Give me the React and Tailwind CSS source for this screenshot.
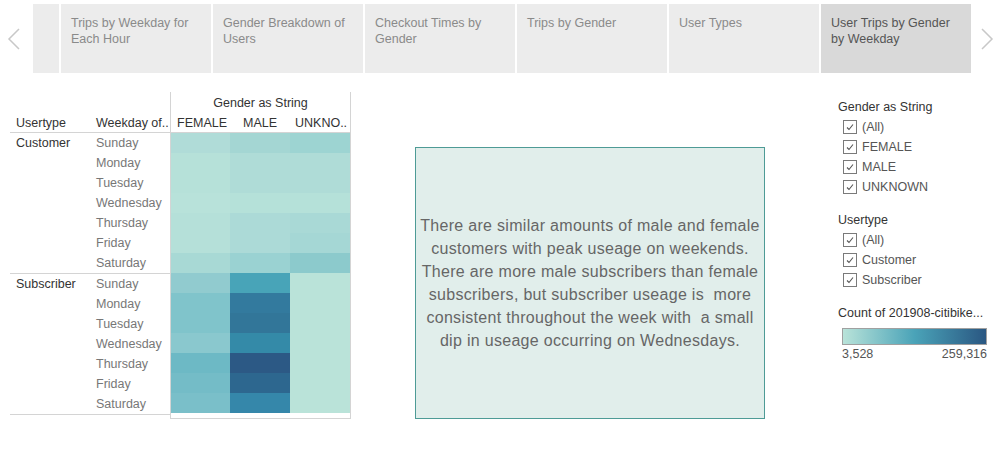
import React from 'react';

const tabs = [
  'Trips by Weekday for Each Hour',
  'Gender Breakdown of Users',
  'Checkout Times by Gender',
  'Trips by Gender',
  'User Types',
  'User Trips by Gender by Weekday',
];

const days = ['Sunday', 'Monday', 'Tuesday', 'Wednesday', 'Thursday', 'Friday', 'Saturday'];

// cell colours per row: [FEMALE, MALE, UNKNOWN]
const customer = [
  ['#b0dcd8', '#a4d6d3', '#9dd4d2'],
  ['#b6e1d9', '#afdcd7', '#afdcd7'],
  ['#b6e1d9', '#afdcd7', '#afdcd7'],
  ['#b8e2da', '#b5e1d9', '#b5e1d9'],
  ['#b5e0d9', '#acdad7', '#a9d9d6'],
  ['#b5e0d9', '#acdad7', '#a5d7d5'],
  ['#a8d9d5', '#9ad2d2', '#8ccacc'],
];

const subscriber = [
  ['#91cbcf', '#48a4b8', '#bae3d9'],
  ['#80c4cb', '#337a9e', '#bae3d9'],
  ['#80c4cb', '#327699', '#bae3d9'],
  ['#8ac8ce', '#348aa8', '#bae3d9'],
  ['#6db9c5', '#2c5985', '#bae3d9'],
  ['#74bcc7', '#2d678f', '#bae3d9'],
  ['#7abfc9', '#3587aa', '#bae3d9'],
];

const note = [
  'There are similar amounts of male and female',
  'customers with peak useage on weekends.',
  'There are more male subscribers than female',
  'subscribers, but subscriber useage is\u00a0 more',
  'consistent throughout the week with\u00a0 a small',
  'dip in useage occurring on Wednesdays.',
];

const Chevron = ({ dir }) => (
  <svg width="14" height="24" viewBox="0 0 14 24" className="text-[#c8c8c8]">
    {dir === 'left' ? (
      <polyline points="12,2 2,12 12,22" fill="none" stroke="currentColor" strokeWidth="1.5" />
    ) : (
      <polyline points="2,2 12,12 2,22" fill="none" stroke="currentColor" strokeWidth="1.5" />
    )}
  </svg>
);

const Check = () => (
  <span className="w-[14px] h-[14px] border border-[#7a7a7a] flex items-center justify-center bg-white">
    <svg width="10" height="10" viewBox="0 0 10 10">
      <polyline points="2,5.5 4,7.5 8,2.5" fill="none" stroke="#555" strokeWidth="1.1" />
    </svg>
  </span>
);

const Group = ({ label }) => (
  <div className="flex border-b border-[#d4d4d4]">
    <div className="w-[80px] pl-[6px] text-[#333] leading-[20px]">{label}</div>
    <div className="w-[80px]">
      {days.map((d) => (
        <div key={d} className="h-[20px] leading-[20px] pl-[6px] text-[#777]">{d}</div>
      ))}
    </div>
  </div>
);

const Cells = ({ rows }) => (
  <div>
    {rows.map((r, i) => (
      <div key={i} className="flex h-[20px]">
        <div className="w-[59px]" style={{ background: r[0] }} />
        <div className="w-[60px]" style={{ background: r[1] }} />
        <div className="w-[60px]" style={{ background: r[2] }} />
      </div>
    ))}
  </div>
);

const FilterList = ({ title, items }) => (
  <div>
    <div className="text-[#333] leading-[18px]">{title}</div>
    <div className="mt-[1px]">
      {items.map((it) => (
        <div key={it} className="flex items-center gap-[5px] h-[20px] pl-[5px]">
          <Check />
          <span className="text-[#555]">{it}</span>
        </div>
      ))}
    </div>
  </div>
);

export default function App() {
  return (
    <div className="w-[1001px] h-[453px] bg-white overflow-hidden text-[12.5px]" style={{ fontFamily: '"Liberation Sans", Arial, sans-serif' }}>
      {/* Tab strip */}
      <div className="flex h-[69px] mt-[4px]">
        <div className="w-[33px] flex items-center justify-start pl-[7px]">
          <Chevron dir="left" />
        </div>
        <div className="flex gap-[2px]">
          <div className="w-[26px] bg-[#ececec]" />
          {tabs.map((t, i) => (
            <div
              key={t}
              className={`w-[150px] px-[10px] pt-[11px] leading-[16px] ${
                i === tabs.length - 1 ? 'bg-[#d9d9d9] text-[#555]' : 'bg-[#ececec] text-[#8a8a8a]'
              }`}
            >
              {t}
            </div>
          ))}
        </div>
        <div className="flex-1 flex items-center justify-end pr-[7px]">
          <Chevron dir="right" />
        </div>
      </div>

      <div className="flex mt-[19px]">
        {/* Heatmap table */}
        <div className="ml-[10px] flex">
          <div className="w-[160px]">
            <div className="h-[21px]" />
            <div className="flex h-[20px] leading-[21px] border-b border-[#d4d4d4] text-[#333]">
              <div className="w-[80px] pl-[6px]">Usertype</div>
              <div className="w-[80px] pl-[6px]">Weekday of..</div>
            </div>
            <Group label="Customer" />
            <Group label="Subscriber" />
          </div>
          <div className="border-l border-r border-b border-[#d4d4d4]">
            <div className="h-[21px] leading-[22px] text-center text-[#333]">Gender as String</div>
            <div className="flex h-[20px] leading-[21px] border-b border-[#d4d4d4] text-[#333]">
              <div className="w-[59px] pl-[6px]">FEMALE</div>
              <div className="w-[60px] text-center">MALE</div>
              <div className="w-[60px] pl-[5px]">UNKNO..</div>
            </div>
            <Cells rows={customer} />
            <Cells rows={subscriber} />
          </div>
        </div>

        {/* Annotation */}
        <div className="ml-[64px] mt-[55px] w-[350px] h-[272px] border border-[#4e9b96] bg-[#e1eeeb] flex items-center justify-center">
          <p className="text-[16px] leading-[23px] tracking-[0.3px] text-[#666] text-center whitespace-nowrap">
            {note.map((l) => (
              <span key={l} className="block">{l}</span>
            ))}
          </p>
        </div>

        {/* Legends */}
        <div className="ml-[73px] mt-[6px] w-[150px]">
          <FilterList title="Gender as String" items={['(All)', 'FEMALE', 'MALE', 'UNKNOWN']} />
          <div className="mt-[14px]">
            <FilterList title="Usertype" items={['(All)', 'Customer', 'Subscriber']} />
          </div>
          <div className="mt-[14px]">
            <div className="text-[#333] leading-[18px] whitespace-nowrap">Count of 201908-citibike...</div>
            <div className="mt-[6px] ml-[4px] w-[145px] h-[17px] border border-[#a0a0a0] bg-[linear-gradient(to_right,#b9e3d9,#4aa3b8_50%,#2a5782)]" />
            <div className="ml-[4px] w-[145px] flex justify-between text-[#555] leading-[18px]">
              <span>3,528</span>
              <span>259,316</span>
            </div>
          </div>
        </div>
      </div>
    </div>
  );
}
